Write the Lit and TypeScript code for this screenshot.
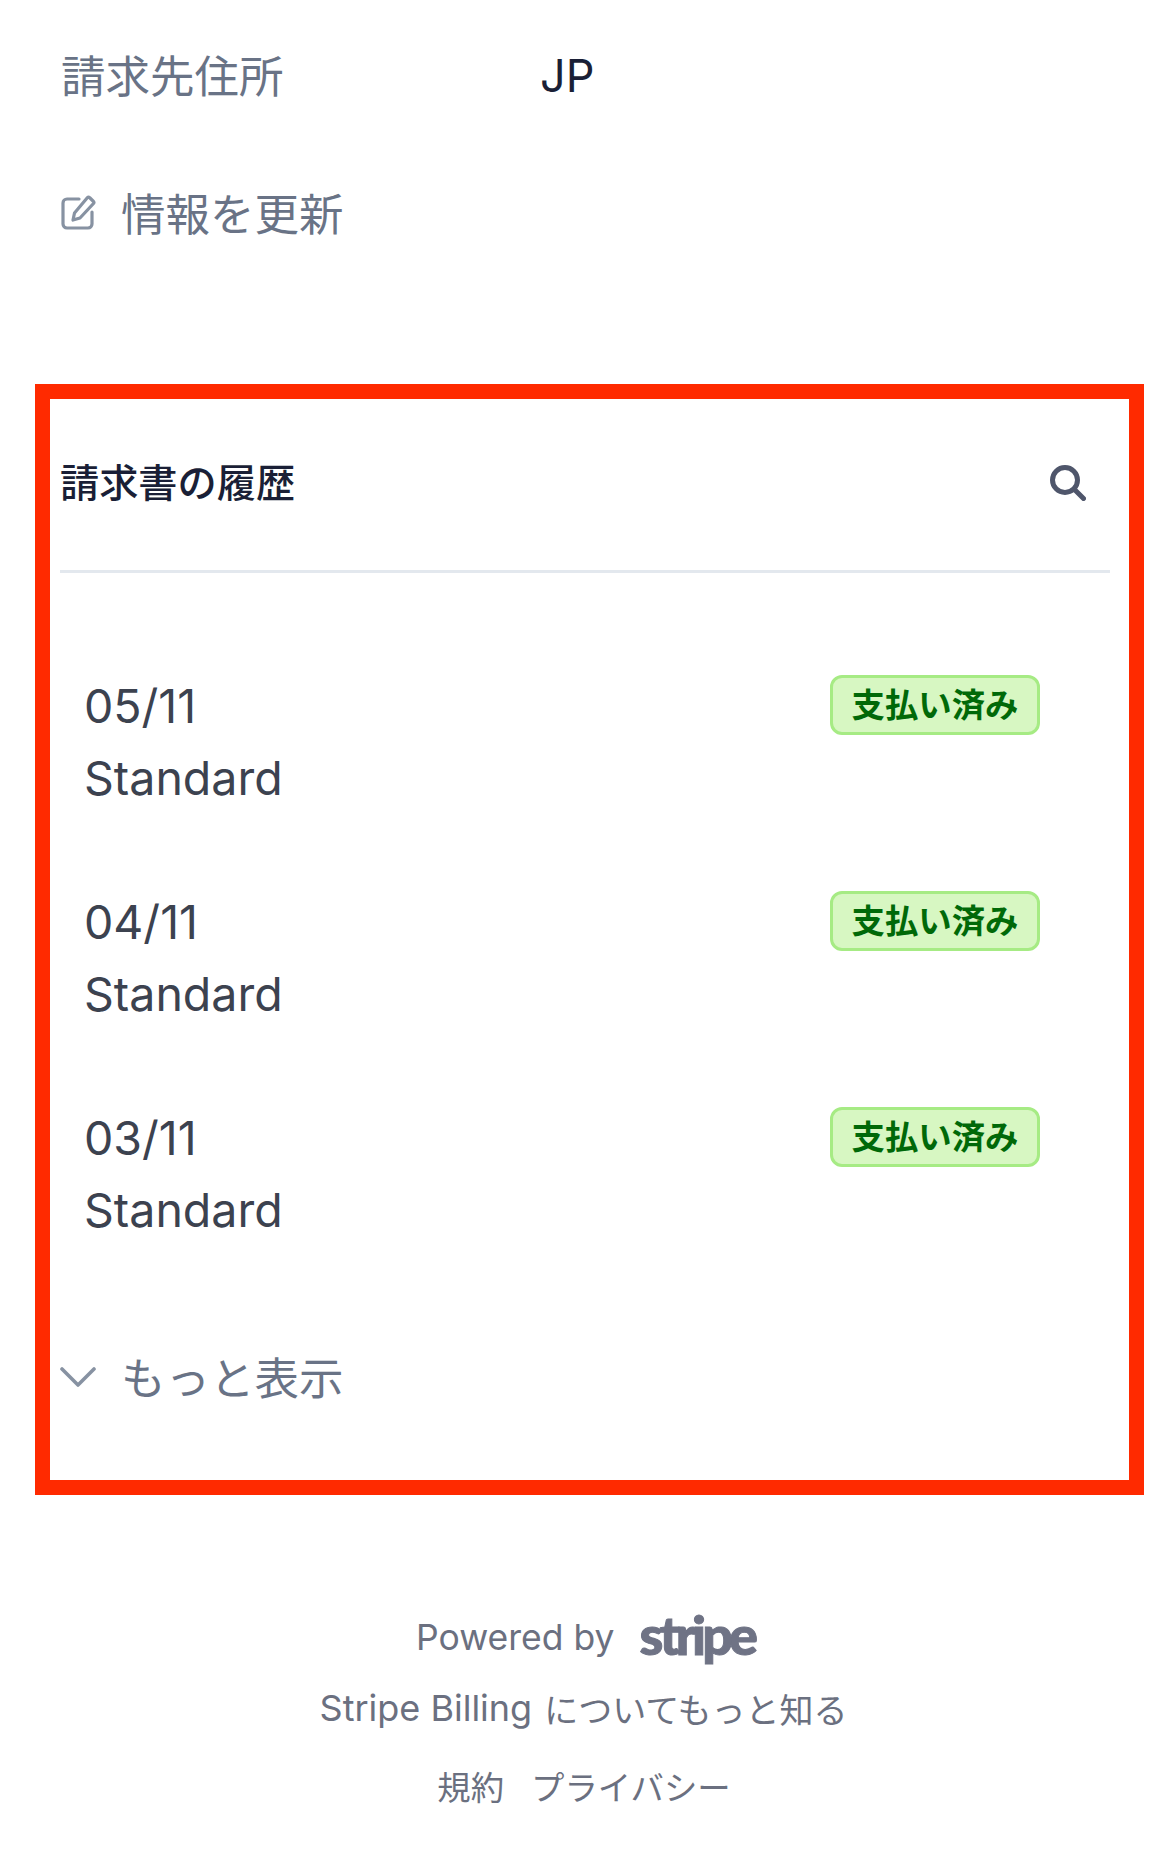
import { LitElement, html, css } from "lit";
import { customElement } from "lit/decorators.js";

@customElement("app-root")
export class AppRoot extends LitElement {
  static styles = css`
    :host {
      display: block;
      width: 1170px;
      height: 1860px;
      overflow: hidden;
      background: #fff;
      font-family: Inter, "Noto Sans CJK JP", "Liberation Sans", sans-serif;
    }
    .top { padding: 37px 61px 0; height: 384px; box-sizing: border-box; }
    .addr { display: flex; align-items: center; height: 72px; }
    .addr-label { width: 479px; font-size: 44.5px; color: #697386; }
    .addr-value { font-size: 45px; color: #1a1f36; margin-top: 5px; }
    .action { display: flex; align-items: center; height: 72px; font-size: 44.5px; color: #697386; gap: 25px; }
    .update { margin-top: 66px; }
    .update svg { margin-top: 2px; }
    .action svg { flex: none; }
    .box { margin: 0 26px 0 35px; border: 15px solid #ff2a00; height: 1111px; box-sizing: border-box; padding: 0 19px 0 10px; }
    .head { display: flex; justify-content: space-between; align-items: center; height: 171px; border-bottom: 3px solid #e3e8ee; padding-right: 24px; }
    .title { font-size: 39.2px; font-weight: 500; color: #1a1f36; margin-top: -10px; }
    .search { margin-bottom: 3px; }
    .rows { padding: 97px 0 0 24px; }
    .row { display: flex; justify-content: space-between; align-items: flex-start; height: 216px; }
    .row-text { font-size: 46.5px; line-height: 72px; color: #3c424f; }
    .badge { margin: 5px 70px 0 0; padding-bottom: 5px; box-sizing: border-box; width: 210px; height: 60px; border: 3px solid #a6eb84; border-radius: 12px; background: #d7f7c2; color: #006908; font-size: 33.4px; font-weight: 600; display: flex; align-items: center; justify-content: center; }
    .more { margin-top: 23px; }
    .more span { margin-top: -4px; }
    .foot { display: flex; flex-direction: column; align-items: center; color: #6b7080; font-size: 34px; padding-right: 3px; }
    .latin { font-size: 35.5px; }
    .powered { display: flex; align-items: center; gap: 25px; margin: 106px 0 0 3px; height: 72px; }
    .stripe { font-family: Lato, sans-serif; font-weight: 900; font-size: 54px; letter-spacing: -4px; line-height: 48px; color: #6f7385; margin-top: -5px; -webkit-text-stroke: 1px #6f7385; }
    .learn { height: 72px; display: flex; align-items: center; gap: 12px; margin-top: -1px; }
    .learn .latin { font-size: 36px; }
    .links { display: flex; gap: 27px; margin: 5px 0 0 1px; height: 72px; align-items: center; font-size: 33.4px; }
  `;

  render() {
    const rows = ["05/11", "04/11", "03/11"];
    return html`
      <div class="top">
        <div class="addr">
          <div class="addr-label">請求先住所</div>
          <div class="addr-value">JP</div>
        </div>
        <div class="action update">
          <svg width="35" height="35" viewBox="0 0 35 35" fill="none" stroke="#8792a2" stroke-width="3.2" stroke-linecap="round" stroke-linejoin="round">
            <path d="M18 4H6a4 4 0 0 0-4 4v21a4 4 0 0 0 4 4h21a4 4 0 0 0 4-4V17" />
            <path d="M28.5 2.5l4 4a1.5 1.5 0 0 1 0 2L19 23l-7 2 1.5-7L26.5 2.5a1.4 1.4 0 0 1 2 0z" />
          </svg>
          <span>情報を更新</span>
        </div>
      </div>
      <div class="box">
        <div class="head">
          <div class="title">請求書の履歴</div>
          <svg class="search" width="36" height="36" viewBox="0 0 36 36" fill="none" stroke="#4f566b" stroke-width="5" stroke-linecap="round">
            <circle cx="15" cy="15" r="12.5" />
            <path d="M25 25l8.5 8.5" />
          </svg>
        </div>
        <div class="rows">
          ${rows.map(
            (d) => html`
              <div class="row">
                <div class="row-text">${d}<br />Standard</div>
                <div class="badge">支払い済み</div>
              </div>
            `
          )}
        </div>
        <div class="action more">
          <svg width="36" height="20" viewBox="0 0 36 20" fill="none" stroke="#8792a2" stroke-width="3.6" stroke-linecap="round" stroke-linejoin="round">
            <path d="M2 2l16 16L34 2" />
          </svg>
          <span>もっと表示</span>
        </div>
      </div>
      <div class="foot">
        <div class="powered"><span class="latin">Powered by</span><span class="stripe">stripe</span></div>
        <div class="learn"><span class="latin">Stripe Billing</span><span>についてもっと知る</span></div>
        <div class="links"><span>規約</span><span>プライバシー</span></div>
      </div>
    `;
  }
}
